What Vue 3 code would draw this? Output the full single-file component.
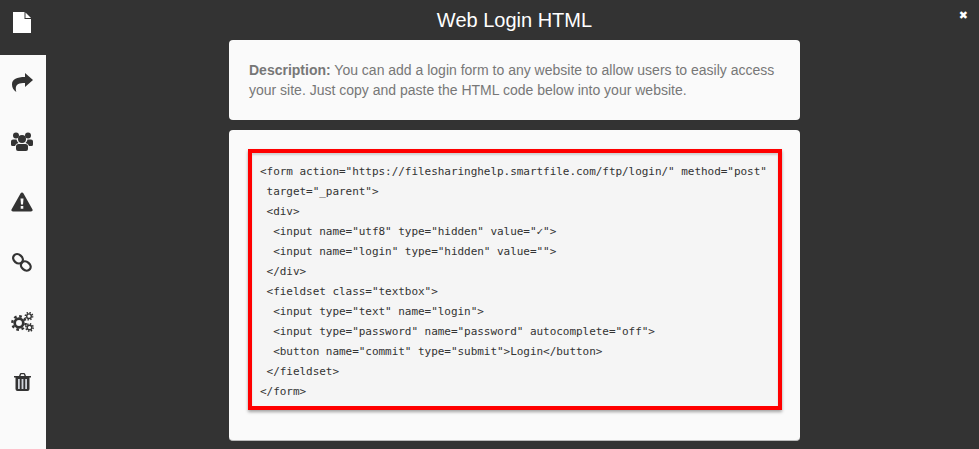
<script setup>
const lines = [
  '<form action="https://filesharinghelp.smartfile.com/ftp/login/" method="post"',
  ' target="_parent">',
  ' <div>',
  '  <input name="utf8" type="hidden" value="✓">',
  '  <input name="login" type="hidden" value="">',
  ' </div>',
  ' <fieldset class="textbox">',
  '  <input type="text" name="login">',
  '  <input type="password" name="password" autocomplete="off">',
  '  <button name="commit" type="submit">Login</button>',
  ' </fieldset>',
  '</form>'
]
</script>

<template>
  <div class="page">
    <aside class="rail">
      <div class="tool active">
        <svg width="18" height="21" viewBox="0 0 18 21"><path d="M0 0H11.500V7H18V21H0Z" fill="#fff"/><path d="M12.500 0.500 18 6H12.500Z" fill="#fff"/></svg>
      </div>
      <div class="tool">
        <svg width="21" height="19" viewBox="0 0 21 19"><path d="M13 0 21 7 13 14V10C7.500 10 3.800 11 3.800 15.500 3.800 16.800 3.900 17.800 4.300 19 1.500 17.500 0 14.500 0 11.500 0 6 5 4 13 4Z" fill="#333"/></svg>
      </div>
      <div class="tool">
        <svg width="22" height="20" viewBox="0 0 22 20" fill="#333"><circle cx="5" cy="3.500" r="3"/><circle cx="17" cy="3.500" r="3"/><circle cx="11" cy="7" r="4"/><path d="M0 9.500Q0 7.500 2 7.500H5.500Q6 9.500 7.500 11 4.500 11.500 4 14H1.500Q0 14 0 12.500Z"/><path d="M22 9.500Q22 7.500 20 7.500H16.500Q16 9.500 14.500 11 17.500 11.500 18 14H20.500Q22 14 22 12.500Z"/><path d="M5 17V14Q5 12 7.500 12H14.500Q17 12 17 14V17Q17 19 15 19H7Q5 19 5 17Z"/></svg>
      </div>
      <div class="tool">
        <svg width="22" height="20" viewBox="0 0 22 20"><path fill-rule="evenodd" fill="#333" d="M11 0.500Q12 0.500 12.500 1.500L21.500 17.500Q22.200 19.500 20 19.500H2Q-0.200 19.500 0.500 17.500L9.500 1.500Q10 0.500 11 0.500ZM9.500 6.500 10 12.500H12L12.500 6.500ZM9.700 14V16.800H12.300V14Z"/></svg>
      </div>
      <div class="tool">
        <svg width="20" height="19" viewBox="0 0 20 19" fill="none" stroke="#333" stroke-width="2.300"><ellipse cx="6" cy="5.800" rx="5.200" ry="4.200" transform="rotate(40 6 5.800)"/><ellipse cx="13.800" cy="13" rx="5.200" ry="4.200" transform="rotate(40 13.800 13)"/></svg>
      </div>
      <div class="tool">
        <svg width="23" height="20" viewBox="0 0 23 20" fill="none" stroke="#333"><circle cx="8" cy="11" r="4.300" stroke-width="2.700"/><circle cx="8" cy="11" r="6.700" stroke-width="2.400" stroke-dasharray="2.630 2.630"/><circle cx="18" cy="4.200" r="2.300" stroke-width="1.400"/><circle cx="18" cy="4.200" r="3.600" stroke-width="1.600" stroke-dasharray="1.410 1.410"/><circle cx="18.500" cy="15.500" r="2.300" stroke-width="1.400"/><circle cx="18.500" cy="15.500" r="3.600" stroke-width="1.600" stroke-dasharray="1.410 1.410"/></svg>
      </div>
      <div class="tool">
        <svg width="17" height="18" viewBox="0 0 17 18"><path fill="#333" d="M5 3 6 0.500Q6.200 0 7 0H10Q10.800 0 11 0.500L12 3H17V4.500H15.500V16Q15.500 18 13.500 18H3.500Q1.500 18 1.500 16V4.500H0V3ZM6.500 3H10.500L9.800 1.300H7.200Z"/><path fill="#cfd3da" d="M4 6H5.800V16H4ZM7.600 6H9.400V16H7.600ZM11.200 6H13V16H11.200Z"/></svg>
      </div>
    </aside>

    <main class="stage">
      <h1 class="title">Web Login HTML</h1>
      <section class="card intro">
        <p><strong>Description:</strong> You can add a login form to any website to allow users to easily access your site. Just copy and paste the HTML code below into your website.</p>
      </section>
      <section class="card code-card">
        <pre class="code"><code><span v-for="(line, i) in lines" :key="i" class="code-line">{{ line }}</span></code></pre>
      </section>
    </main>

    <span class="close">✖</span>
  </div>
</template>

<style>
html, body { margin: 0; background: #333; }
</style>

<style scoped>
.page {
  position: relative;
  display: flex;
  width: 979px;
  height: 449px;
  overflow: hidden;
  background: #333;
  font-family: "Liberation Sans", Arial, sans-serif;
}
.rail {
  flex: 0 0 46px;
  display: flex;
  flex-direction: column;
  background: #fafafa;
}
.tool {
  flex: 0 0 60px;
  box-sizing: border-box;
  padding-right: 2px;
  display: flex;
  align-items: center;
  justify-content: center;
}
.tool.active {
  flex-basis: 55px;
  padding-bottom: 10px;
  margin-bottom: -3px;
  background: #333;
}
.stage {
  flex: 1;
  display: flex;
  flex-direction: column;
  align-items: center;
  padding-left: 4px;
}
.title {
  margin: 0;
  width: 571px;
  height: 40px;
  line-height: 40px;
  text-align: center;
  font-size: 20px;
  font-weight: 400;
  color: #fff;
}
.card {
  width: 571px;
  box-sizing: border-box;
  background: #fafafa;
  border-radius: 4px;
}
.intro {
  height: 80px;
  padding: 20px;
  margin-bottom: 10px;
}
.intro p {
  margin: 0;
  font-size: 14px;
  line-height: 20px;
  color: #777;
}
.code-card {
  height: 311px;
  padding: 19px;
  border-bottom: 1px solid #bbb;
}
.code {
  margin: 0;
  width: 534px;
  height: 261px;
  box-sizing: border-box;
  padding: 9px 8px;
  background: #f5f5f5;
  border: 4px solid #f00;
  box-shadow: 0 2px 3px rgba(0, 0, 0, 0.35), inset 0 2px 2px rgba(0, 0, 0, 0.15);
  font-family: "DejaVu Sans Mono", monospace;
  font-size: 11px;
  letter-spacing: -0.04px;
  line-height: 20px;
  color: #333;
  white-space: pre;
}
.code-line { display: block; height: 20px; }
.close {
  position: absolute;
  top: 9px;
  right: 11px;
  font-family: "DejaVu Sans", sans-serif;
  font-size: 11px;
  line-height: 14px;
  color: #fff;
}
</style>
